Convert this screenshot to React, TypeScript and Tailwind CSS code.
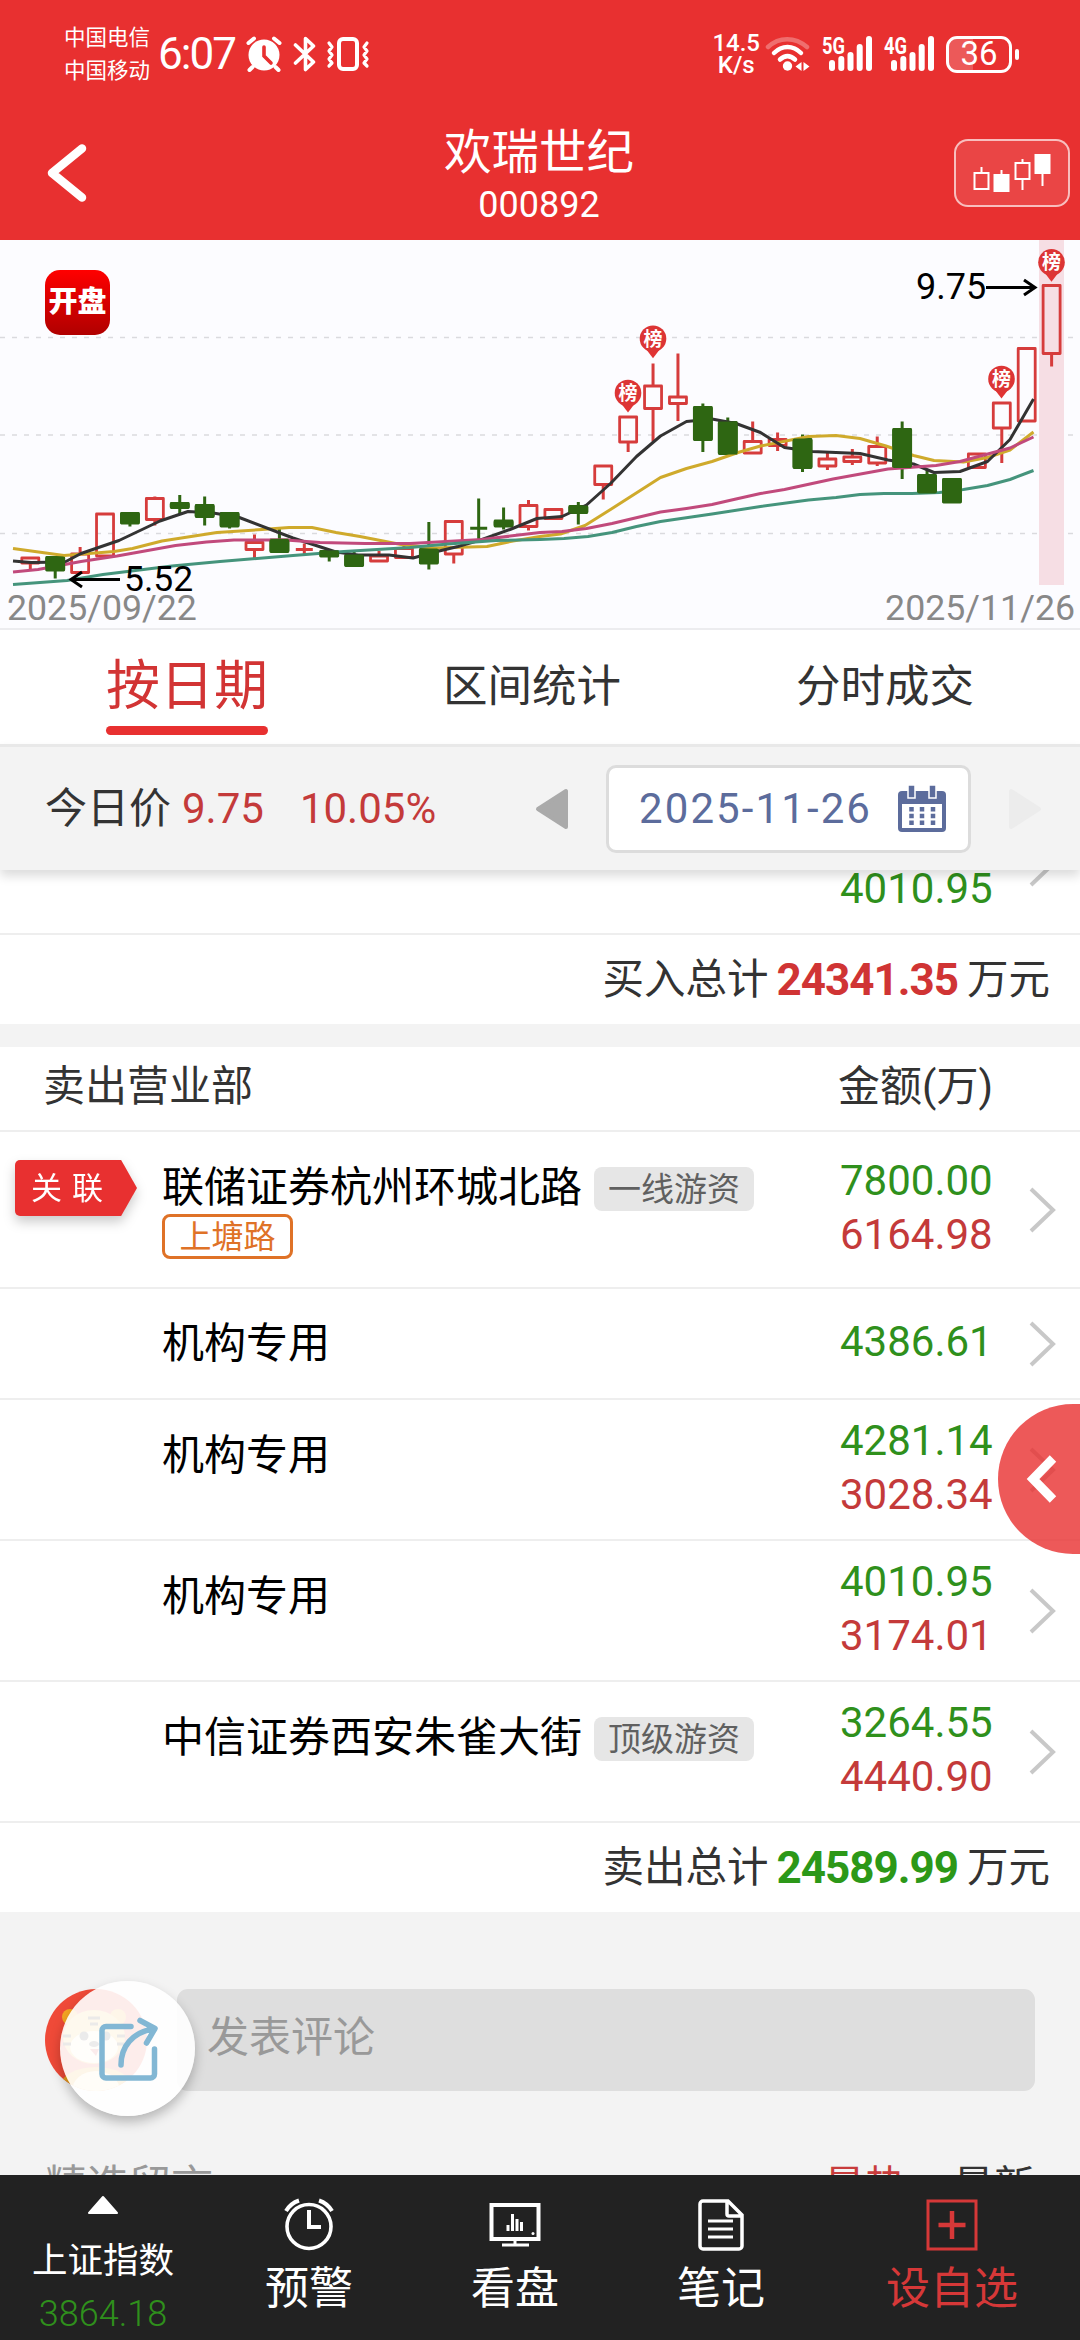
import { useState } from "react";

type Candle = [top: number, bottom: number, high: number, low: number, up: boolean];

const candles: Candle[] = [
  [318, 323, 318, 330, true],
  [317.5, 330, 317, 338.5, false],
  [314, 332.5, 307, 332.5, true],
  [274, 316, 274, 316, true],
  [273.5, 283, 272.5, 286.5, false],
  [258.5, 279.5, 256.5, 285.5, true],
  [263.5, 267.5, 255, 274, false],
  [265.5, 276.5, 256.5, 285.5, false],
  [273.5, 286, 272.5, 288.5, false],
  [302.5, 309.5, 294.5, 319, true],
  [300, 311.5, 287.5, 312.5, false],
  [309.5, 310, 303.5, 315, true],
  [311.5, 316, 310, 321.5, false],
  [315.5, 325.5, 311, 326.5, false],
  [316, 321, 311, 321, true],
  [308.5, 317.5, 304, 317.5, true],
  [309.5, 323, 282, 329.5, false],
  [281.5, 314, 281.5, 323.5, true],
  [288.3, 288.8, 258.5, 301.5, false],
  [281, 286, 267.5, 289.5, false],
  [265.5, 286.5, 260, 290.5, true],
  [269.5, 278.5, 268, 280, true],
  [266.5, 272.5, 262, 284.5, false],
  [226, 244.5, 226, 259.5, true],
  [177, 202, 177, 212, true],
  [146, 168.5, 123.5, 201.5, true],
  [157, 163.5, 113.5, 181, true],
  [167.5, 199.5, 163.5, 212, false],
  [182.5, 213.5, 177.5, 216.5, false],
  [201.5, 213, 181.5, 213.5, true],
  [199.5, 205.5, 192.5, 211, true],
  [199.5, 227.5, 194.5, 232, false],
  [219, 226, 212.5, 230, true],
  [217, 221.5, 209, 225, true],
  [206.5, 223, 196.5, 226, true],
  [189.5, 227, 181.5, 239, false],
  [235.5, 252.5, 230, 254, false],
  [239.5, 262, 239.5, 262, false],
  [214, 227.5, 214, 227.5, true],
  [163, 188, 163, 223, true],
  [108.5, 181, 108.5, 181, true],
  [45.5, 113.5, 45.5, 126.5, true],
];

const averages = [
  {
    color: "#cfaa2c",
    points:
      "13,308.5 64,315.5 114,311.5 132.5,308.5 162,301 217,292.5 262,289.5 289,287.5 312,287.5 336,292.5 360,296.5 401,304.5 434,308 487,306.5 513,301 540,296.5 560.5,294 585,285.5 610.5,269.5 660.5,237.5 686.5,228.5 712,221.5 738,212.5 760.5,206 808.5,196.5 836,195.5 860,198.5 886,206 913.5,215.5 934,220.5 963.5,222 987.5,217.5 1010,210 1033.5,192",
  },
  {
    color: "#333333",
    points:
      "13,321 31,322.5 65,322 81,313.5 119,300.5 160,281 188,271.5 213,273 238,277 293,298 336,312 358,315 389,315 413,318 437,311.5 458,306.5 482,299.5 510,289.5 537,278.5 562,276.5 586.5,265 610.5,243.5 636.5,216.5 660.5,196 686.5,181.5 712,179 736,183.5 760.5,192.5 784.5,207.5 812,211.5 860,213.5 888,220 913.5,224 934,232.5 960,231.5 987.5,221.5 1010,199.5 1033.5,159",
  },
  {
    color: "#c14a7c",
    points:
      "13,332 38,329.5 81,321.5 117,316 175.5,305.5 206.5,302 234,300 286,300 320,302.5 365,303.5 410,303.5 482,299.5 540,292.5 562,291.5 586.5,288.5 612,283.5 660.5,272 686.5,268.5 712,264.5 736,259 760.5,253.5 784.5,249.5 833,239 888,229 936,225.5 960,221.5 1010,208 1033.5,197",
  },
  {
    color: "#45947c",
    points:
      "13,344.5 67,340.5 103,334.5 172,326 220,321.5 293,315.5 344,311.5 410,307.5 448,304 496,300.5 540,299.5 564,298.5 588,296.5 612,292.5 636.5,286.5 660.5,281.5 712,274 760.5,266.5 808.5,260 836,257.5 860,254.5 884,253.5 912,253.5 939.5,252.5 963.5,249.5 987.5,245.5 1010,239.5 1033.5,230.5",
  },
];

const pins = [
  [628, 153],
  [653, 98.7],
  [1001.5, 139],
  [1051.5, 22.3],
];

const rows = [
  { name: "联储证券杭州环城北路", tag: "一线游资", alias: "上塘路", linked: true, sell: "7800.00", buy: "6164.98", height: "h-[157px]" },
  { name: "机构专用", sell: "4386.61", height: "h-[111px]" },
  { name: "机构专用", sell: "4281.14", buy: "3028.34", height: "h-[141px]" },
  { name: "机构专用", sell: "4010.95", buy: "3174.01", height: "h-[141px]" },
  { name: "中信证券西安朱雀大街", tag: "顶级游资", sell: "3264.55", buy: "4440.90", height: "h-[141px]" },
];

const tabs = ["按日期", "区间统计", "分时成交"];

function Signal({ label }) {
  return (
    <svg width="46" height="40" viewBox="0 0 46 40" fill="#fff">
      <text x="0" y="20" fontSize="23" fontWeight="700" textLength="23" lengthAdjust="spacingAndGlyphs">
        {label}
      </text>
      <rect x="7" y="26" width="6" height="11" rx="3" />
      <rect x="16.3" y="22" width="6" height="15" rx="3" />
      <rect x="25.5" y="18" width="6" height="19" rx="3" />
      <rect x="34.7" y="10" width="6" height="27" rx="3" />
      <rect x="44" y="2" width="6" height="35" rx="3" />
    </svg>
  );
}

function StatusBar() {
  return (
    <div className="flex h-[108px] shrink-0 items-center pl-[64px] pr-[61px] text-white">
      <div className="flex flex-col text-[21.5px] leading-[33px]">
        <span>中国电信</span>
        <span>中国移动</span>
      </div>
      <span className="ml-[8px] w-[80px] text-[44px] leading-[50px] tracking-[-2px]">6:07</span>
      <svg className="ml-[8px]" width="36" height="36" viewBox="0 0 36 36">
        <circle cx="18" cy="19" r="15.5" fill="#fff" />
        <path d="M2.5 7 8 2.5M33.500 7 28 2.500M6.500 31l-3 3M29.500 31l3 3" stroke="#fff" strokeWidth="4" strokeLinecap="round" />
        <path d="M18 11v9l7 7" stroke="#e83030" strokeWidth="3.600" fill="none" strokeLinecap="round" />
      </svg>
      <svg className="ml-[11px]" width="24" height="36" viewBox="0 0 24 36" fill="none" stroke="#fff" strokeWidth="3.600" strokeLinecap="round" strokeLinejoin="round">
        <path d="M2.500 9 20.500 26 12.500 33.500V2.500L20.500 10 2.500 27" />
      </svg>
      <svg className="ml-[9px]" width="44" height="36" viewBox="0 0 44 36" fill="none" stroke="#fff" strokeLinecap="round" strokeLinejoin="round">
        <rect x="13" y="3" width="18" height="30" rx="4" strokeWidth="4" />
        <path d="M3 7l3 4-3 4 3 4-3 4 3 4-3 3M41 7l-3 4 3 4-3 4 3 4-3 4 3 3" strokeWidth="3.200" />
      </svg>
      <div className="ml-auto flex flex-col items-center text-[24px] font-medium leading-[22px]">
        <span>14.5</span>
        <span>K/s</span>
      </div>
      <svg className="ml-[5px]" width="46" height="38" viewBox="0 0 46 38" fill="none" stroke="#fff" strokeWidth="4.500" strokeLinecap="round">
        <path d="M3 12C14 1.500 30 1.500 42 12" strokeOpacity=".3" />
        <path d="M9 18C17 10 28 10 36 18" />
        <path d="M15 24.500C20 20 25 20 30 24.500" />
        <circle cx="22.500" cy="31" r="4.700" fill="#fff" stroke="none" />
        <path d="M36.500 27v9l-6-4.500zM38.500 27v9l6-4.500z" fill="#fff" stroke="none" />
      </svg>
      <div className="ml-[11px] flex gap-[16px] [&>svg]:overflow-visible">
        <Signal label="5G" />
        <Signal label="4G" />
      </div>
      <div className="ml-[16px] flex items-center gap-[3px]">
        <div className="relative flex h-[37px] w-[66px] items-center justify-center overflow-hidden rounded-[11px] border-3 border-white text-[33px] leading-[34px]">
          <div className="absolute inset-y-0 left-0 w-[24px] bg-white/20" />
          36
        </div>
        <div className="h-[11px] w-[4px] rounded-full bg-white" />
      </div>
    </div>
  );
}

function TitleBar() {
  return (
    <div className="flex h-[132px] shrink-0 items-start justify-between pl-[46px] pr-[10px] text-white">
      <svg className="mt-[34px] mr-[36px]" width="42" height="62" viewBox="0 0 42 62" fill="none" stroke="#fff" strokeWidth="8.500" strokeLinecap="round" strokeLinejoin="round">
        <path d="M36 6.500 6 31 36 55.500" />
      </svg>
      <div className="mt-[18px] flex flex-col items-center">
        <span className="text-[47.5px] leading-[54px]">欢瑞世纪</span>
        <span className="mr-[-6px] text-[36px] leading-[50px] -translate-x-[3px]">000892</span>
      </div>
      <div className="mt-[31px] flex h-[68px] w-[116px] items-center justify-center rounded-[14px] border-2 border-white/65 bg-white/10">
        <svg width="80" height="43" viewBox="0 0 80 43" stroke="#fff" strokeWidth="2" fill="none">
          <path d="M9.500 15v5M29.500 18v5M50.500 7v4M50.500 28v10M70.500 22v12" />
          <path d="M2.500 21h14v16h-14zM43.500 11h14v16h-14z" />
          <path d="M22.500 23h14v16h-14zM63.500 3h14v18h-14z" fill="#fff" />
        </svg>
      </div>
    </div>
  );
}

function KLine() {
  return (
    <div className="relative h-[390px] shrink-0 border-b-2 border-[#ececef] bg-[#fcfcff]">
      <svg width="1080" height="388" viewBox="0 0 1080 388" fill="none">
        {[97.5, 195, 293.5].map((y) => (
          <path key={y} d={`M0 ${y}H1080`} stroke="#dadade" strokeWidth="1.5" strokeDasharray="5 7" />
        ))}
        <rect x="1039" width="25" height="345" fill="#f6dee4" />
        {candles.map(([top, bottom, high, low, up], i) => {
          const x = 30.3 + i * 24.91;
          const color = up ? "#d63c3c" : "#2e6612";
          if (bottom - top < 1) {
            return <path key={i} d={`M${x - 8.5} ${top}H${x + 8.5}M${x} ${high}V${low}`} stroke={color} strokeWidth="3" />;
          }
          return (
            <g key={i} stroke={color} strokeWidth="2.8" strokeLinejoin="round">
              <path d={`M${x} ${high}V${top}M${x} ${bottom}V${low}`} strokeWidth="3" />
              <rect x={x - 8.5} y={top} width="17" height={bottom - top} fill={up ? "none" : color} />
            </g>
          );
        })}
        {averages.map((line) => (
          <polyline key={line.color} points={line.points} stroke={line.color} strokeWidth="3" strokeLinejoin="round" />
        ))}
        {candles.map(([top, bottom, , , up], i) =>
          up || bottom - top < 1 ? null : (
            <rect key={i} x={20.4 + i * 24.91} y={top - 1} width="19.8" height={bottom - top + 2} rx="2" fill="#2e6612" />
          ),
        )}
        {pins.map(([x, y]) => (
          <g key={x}>
            <path d={`M${x - 8} ${y + 9}H${x + 8}L${x} ${y + 19.5}z`} fill="#e13333" />
            <circle cx={x} cy={y} r="13.3" fill="#dc3535" />
            <text x={x} y={y + 7} fontSize="19" fontWeight="700" textAnchor="middle" fill="#fff">
              榜
            </text>
          </g>
        ))}
        <g stroke="#000" strokeWidth="3">
          <path d="M120 339.500H72M82 332 71 339.500 82 347" />
          <path d="M986 47.500H1034M1024 40 1035 47.500 1024 55" />
        </g>
        <text x="124" y="351" fontSize="35.5" fill="#000">5.52</text>
        <text x="916" y="59" fontSize="36" fill="#000">9.75</text>
        <text x="7" y="379.500" fontSize="35.7" fill="#888">2025/09/22</text>
        <text x="1075" y="379.500" fontSize="35.7" fill="#888" textAnchor="end">2025/11/26</text>
      </svg>
      <div className="absolute left-[45px] top-[30px] flex h-[65px] w-[65px] items-center justify-center rounded-[15px] bg-linear-to-b from-[#ff0000] to-[#b00000] text-[29px] font-black leading-none text-white">
        开盘
      </div>
    </div>
  );
}

function Chevron() {
  return (
    <svg width="30" height="48" viewBox="0 0 30 48" fill="none" stroke="#c8c8c8" strokeWidth="4">
      <path d="M3 3 25 24 3 45" />
    </svg>
  );
}

function Row({ name, tag, alias, linked, sell, buy, height }: any) {
  return (
    <div className={`flex shrink-0 items-center border-b-2 border-[#eeeeee] bg-white pr-[22px] ${height}`}>
      <div className={`flex w-[162px] self-start pl-[15px] ${linked ? "pt-[28px]" : ""}`}>
        {linked && (
          <div className="h-[56px] w-[122px] drop-shadow-[0_6px_6px_rgba(0,0,0,0.2)]">
            <div className="flex h-full items-center rounded-l-[5px] bg-[#e83030] pl-[16px] text-[31px] leading-none tracking-[10px] text-white [clip-path:polygon(0_0,87%_0,100%_50%,87%_100%,0_100%)]">
              关联
            </div>
          </div>
        )}
      </div>
      <div className={`flex flex-1 flex-col ${buy ? "self-start pt-[30px]" : ""}`}>
        <div className="flex h-[52px] items-center gap-[12px]">
          <span className="text-[42px] leading-[52px] text-black">{name}</span>
          {tag && (
            <span className="mt-[2px] flex h-[44px] items-center rounded-[8px] bg-[#e6e6e6] px-[14px] text-[33px] leading-none text-[#606060]">
              {tag}
            </span>
          )}
        </div>
        {alias && (
          <span className="flex h-[45px] w-[131px] items-center justify-center rounded-[8px] border-3 border-[#df7227] text-[32px] leading-none text-[#df7227]">
            {alias}
          </span>
        )}
      </div>
      <div className="mr-[36px] mb-[4px] flex w-[152px] flex-col text-[42px] leading-[54px]">
        <span className="text-[#2f901c]">{sell}</span>
        {buy && <span className="text-[#c43a3a]">{buy}</span>}
      </div>
      <Chevron />
    </div>
  );
}

function Total({ label, value, color }) {
  return (
    <div className="flex h-[89px] shrink-0 items-center justify-end bg-white pr-[30px] text-[41.5px] leading-none text-[#333]">
      <span>{label}</span>
      <span className={`mr-[9px] ml-[8px] text-[44px] font-bold tracking-[-1px] ${color}`}>{value}</span>
      <span>万元</span>
    </div>
  );
}

function Comments() {
  return (
    <div className="relative flex flex-1 flex-col overflow-hidden bg-[#f3f3f3]">
      <div className="mt-[77px] flex items-center pl-[45px] pr-[45px]">
        <svg width="102" height="102" viewBox="0 0 102 102">
          <clipPath id="avatar">
            <circle cx="51" cy="51" r="51" />
          </clipPath>
          <g clipPath="url(#avatar)">
            <rect width="102" height="102" fill="#ef4a38" />
            <circle cx="25" cy="28" r="8" fill="#f5a623" />
            <circle cx="73" cy="28" r="8" fill="#f5a623" />
            <ellipse cx="49" cy="48" rx="31" ry="27" fill="#f9c050" />
            <ellipse cx="49" cy="58" rx="24" ry="16" fill="#fff0d8" />
            <path d="M18 47h8M18 55h8M72 47h8M72 55h8M43 29h12M45 35h8" stroke="#3a2a20" strokeWidth="3" />
            <circle cx="39" cy="47" r="4.500" fill="#333" />
            <circle cx="61" cy="47" r="4.500" fill="#333" />
            <ellipse cx="49" cy="55" rx="5" ry="3" fill="#444" />
            <path d="M45 60h9l-3 7z" fill="#d84040" />
            <ellipse cx="51" cy="98" rx="36" ry="20" fill="#e8a020" />
            <ellipse cx="51" cy="102" rx="24" ry="20" fill="#ffe8b8" />
          </g>
        </svg>
        <div className="ml-[30px] flex h-[102px] flex-1 items-center rounded-[11px] bg-[#dedede] pb-[5px] pl-[30px] text-[42px] leading-none text-[#999]">
          发表评论
        </div>
      </div>
      <div className="mt-[67px] flex items-start pl-[45px] pr-[45px] text-[42px] leading-[56px] text-[#999]">
        <span>精选留言</span>
        <span className="ml-auto text-[41px] text-[#c83c3c]">最热</span>
        <span className="ml-[47px] text-[41px] text-[#333]">最新</span>
      </div>
      <div className="absolute left-[60px] top-[69px] flex h-[135px] w-[135px] items-center justify-center rounded-full bg-white/90 shadow-[0_6px_12px_rgba(0,0,0,0.25)]">
        <svg width="62" height="68" viewBox="0 0 62 68" fill="none" stroke="#82b7d4" strokeWidth="5.500" strokeLinecap="round" strokeLinejoin="round">
          <path d="M34 11.500H9a4 4 0 0 0-4 4V59a4 4 0 0 0 4 4h44.500a4 4 0 0 0 4-4V34" />
          <path d="M24 50C24 32 35 17 57 14M43 5.500 58 13.500 49.500 28" />
        </svg>
      </div>
    </div>
  );
}

function NavItem({ label, children, className = "w-[206px]" }) {
  return (
    <button className={`flex flex-col items-center pt-[22px] text-[44px] leading-[60px] ${className}`}>
      <svg width="54" height="56" viewBox="0 0 54 56" fill="none" stroke="currentColor" strokeWidth="3">
        {children}
      </svg>
      <span className="mt-[6px]">{label}</span>
    </button>
  );
}

function BottomNav() {
  return (
    <div className="flex h-[165px] shrink-0 overflow-hidden bg-[#222] text-white">
      <div className="flex w-[206px] flex-col items-center pt-[20px]">
        <svg width="32" height="20" viewBox="0 0 32 20">
          <path d="M16 2 30 18H2z" fill="#fff" stroke="#fff" strokeWidth="2" strokeLinejoin="round" />
        </svg>
        <span className="mt-[23px] text-[35.5px] leading-[46px]">上证指数</span>
        <span className="mt-[7px] text-[36px] font-light leading-[46px] text-[#2f901c]">3864.18</span>
      </div>
      <NavItem label="预警">
        <circle cx="27" cy="29.500" r="22" strokeWidth="3.600" />
        <path d="M27 13v17h12" strokeWidth="4" />
        <path d="M4 14C7 9 11 5.500 17 3.500M50 14C47 9 43 5.500 37 3.500" strokeWidth="4" />
      </NavItem>
      <NavItem label="看盘">
        <rect x="3.500" y="8" width="47" height="34" strokeWidth="4" />
        <path d="M27 42v5M14 48h27M20 28v6M24.500 17v17M29 22v12M33.500 25v9" />
        <circle cx="45" cy="36.500" r="1.500" fill="currentColor" stroke="none" />
      </NavItem>
      <NavItem label="笔记">
        <path d="M34 4H9a3 3 0 0 0-3 3v42a3 3 0 0 0 3 3h36a3 3 0 0 0 3-3V18zM33 4v13a2 2 0 0 0 2 2h13" strokeWidth="3.500" />
        <path d="M14 24h25M14 32h25M14 40h25" />
      </NavItem>
      <NavItem label="设自选" className="w-[256px] text-[#d63838]">
        <rect x="3" y="4" width="48" height="48" />
        <path d="M27 14v28M13.500 28h27" strokeWidth="4.500" />
      </NavItem>
    </div>
  );
}

export default function App() {
  const [tab, setTab] = useState(0);

  return (
    <div className="relative flex h-[2340px] w-[1080px] flex-col overflow-hidden bg-white font-[Roboto,'Noto_Sans_CJK_SC',sans-serif]">
      <div className="flex flex-col bg-[#e83030]">
        <StatusBar />
        <TitleBar />
      </div>
      <KLine />
      <div className="flex h-[114px] shrink-0 items-start justify-between px-[106px]">
        {tabs.map((label, i) => (
          <button
            key={label}
            onClick={() => setTab(i)}
            className={
              i === tab
                ? "relative h-[105px] text-[54px] leading-[113px] text-[#d23434] after:absolute after:inset-x-0 after:bottom-0 after:h-[9px] after:rounded-full after:bg-[#e83030]"
                : "h-[105px] text-[44.500px] leading-[114px] text-[#333]"
            }
          >
            {label}
          </button>
        ))}
      </div>
      <div className="relative z-10 flex h-[126px] shrink-0 items-center border-t-3 border-[#e8e8e8] bg-[#f3f3f3] pl-[45px] pr-[38px] text-[42px] leading-none shadow-[0_6px_10px_rgba(0,0,0,0.14)]">
        <span className="text-[#333]">今日价</span>
        <span className="ml-[11px] text-[#c43a3a]">9.75</span>
        <span className="ml-[36px] text-[#c43a3a]">10.05%</span>
        <svg className="ml-auto" width="34" height="42" viewBox="0 0 34 42">
          <path d="M31 3v36L3 21z" fill="#aaa" stroke="#aaa" strokeWidth="4" strokeLinejoin="round" />
        </svg>
        <div className="ml-[37px] flex h-[88px] w-[365px] items-center justify-between rounded-[10px] border-3 border-[#dcdcdc] bg-white pl-[30px] pr-[21px] text-[#5c6c9c]">
          <span className="tracking-[2.100px]">2025-11-26</span>
          <svg width="50" height="48" viewBox="0 0 50 48">
            <rect x="1" y="6" width="48" height="41" rx="4" fill="#5c6c9c" />
            <rect x="5" y="19" width="40" height="24" fill="#fff" />
            <path d="M11 0h7v13h-7zM32 0h7v13h-7z" fill="#5c6c9c" stroke="#fff" strokeWidth="1.500" />
            <path d="M14.500 22v19M25 22v19M36 22v19" stroke="#5c6c9c" strokeWidth="4.500" strokeDasharray="4.500 2.200" />
          </svg>
        </div>
        <svg className="ml-[37px]" width="34" height="42" viewBox="0 0 34 42">
          <path d="M3 3v36L31 21z" fill="#ececec" stroke="#ececec" strokeWidth="4" strokeLinejoin="round" />
        </svg>
      </div>
      {/* last buy row, scrolled under the date bar */}
      <div className="flex h-[65px] shrink-0 items-end overflow-hidden border-b-2 border-[#eee]">
        <div className="flex h-[139px] w-full shrink-0 items-center justify-end pr-[22px]">
          <span className="mr-[36px] mt-[51px] w-[152px] text-[42px] leading-[54px] text-[#2f901c]">4010.95</span>
          <Chevron />
        </div>
      </div>
      <Total label="买入总计" value="24341.35" color="text-[#d03434]" />
      <div className="h-[23px] shrink-0 bg-[#f3f3f3]" />
      <div className="flex h-[85px] shrink-0 items-center border-b-2 border-[#eee] pb-[3px] pl-[43px] text-[42px] leading-none text-[#333]">
        <span className="flex-1">卖出营业部</span>
        <span className="w-[242px] whitespace-nowrap">金额(万)</span>
      </div>
      {rows.map((row, i) => (
        <Row key={i} {...row} />
      ))}
      <Total label="卖出总计" value="24589.99" color="text-[#2c9818]" />
      <Comments />
      <BottomNav />
      <button className="absolute left-[998px] top-[1404px] h-[150px] w-[82px] rounded-l-[75px] bg-[#e83030]/80 pl-[27px]">
        <svg width="36" height="50" viewBox="0 0 36 50" fill="none" stroke="#fff" strokeWidth="9">
          <path d="M28 4.500 8 25 28 45.500" />
        </svg>
      </button>
    </div>
  );
}
